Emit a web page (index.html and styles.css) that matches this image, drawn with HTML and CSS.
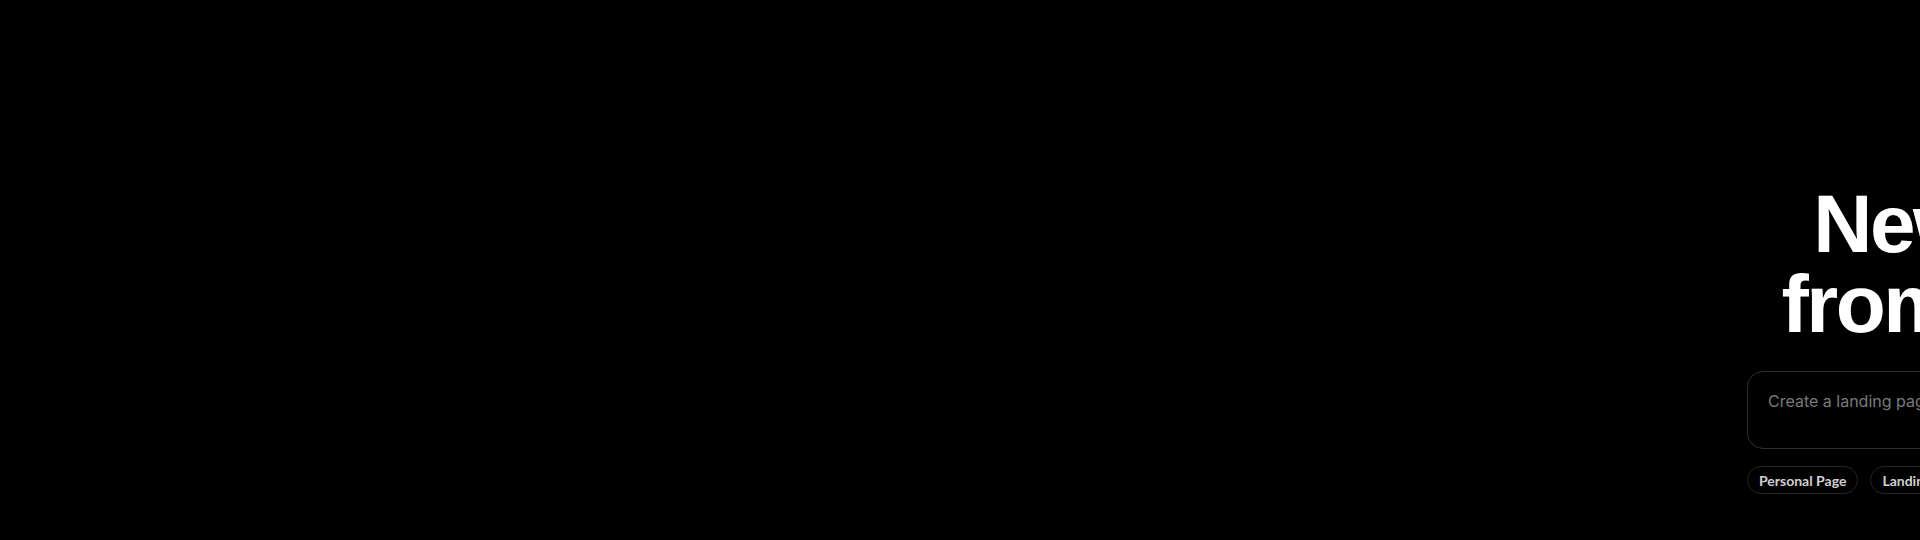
FILE: index.html
```html
<!DOCTYPE html>
<html lang="en">
<head>
<meta charset="utf-8">
<title>New project</title>
<link rel="stylesheet" href="styles.css">
</head>
<body>
<main class="page">
  <section class="hero">
    <h1 class="title"><span class="line">New project</span><span class="line">from a sketch</span></h1>
    <div class="prompt">
      <div class="placeholder">Create a landing page for my design studio</div>
    </div>
    <div class="chips">
      <button class="chip">Personal Page</button>
      <button class="chip">Landing Page</button>
      <button class="chip">Dashboard</button>
      <button class="chip">Portfolio</button>
    </div>
  </section>
</main>
</body>
</html>
```
FILE: styles.css
```css
html, body {
  margin: 0;
  padding: 0;
  background: #000;
  height: 100%;
  overflow: hidden;
}
body {
  font-family: "Inter", "Liberation Sans", sans-serif;
  color: #fff;
}
.page {
  display: flex;
  padding-left: 1747px;
  padding-top: 184px;
}
.hero {
  width: 570px;
  flex: none;
  display: flex;
  flex-direction: column;
}
.title {
  margin: 0;
  font-family: "Liberation Sans", "Inter", sans-serif;
  font-size: 82px;
  line-height: 80px;
  font-weight: 700;
  letter-spacing: -0.03em;
  text-align: center;
  white-space: nowrap;
}
.line {
  display: block;
}
.prompt {
  margin-top: 27px;
  height: 78px;
  box-sizing: border-box;
  border: 1px solid #2e2e2e;
  border-radius: 16px;
  padding: 19px 20px;
}
.placeholder {
  font-size: 16px;
  color: #7a7a7a;
  line-height: 20px;
  white-space: nowrap;
}
.chips {
  margin-top: 17px;
  display: flex;
  gap: 12px;
}
.chip {
  font-family: "Lato", "Inter", sans-serif;
  font-weight: 700;
  font-size: 14px;
  color: #d0d0d0;
  background: transparent;
  border: 1px solid #262626;
  border-radius: 999px;
  height: 28px;
  padding: 0 11px;
  white-space: nowrap;
  flex: none;
}
```
